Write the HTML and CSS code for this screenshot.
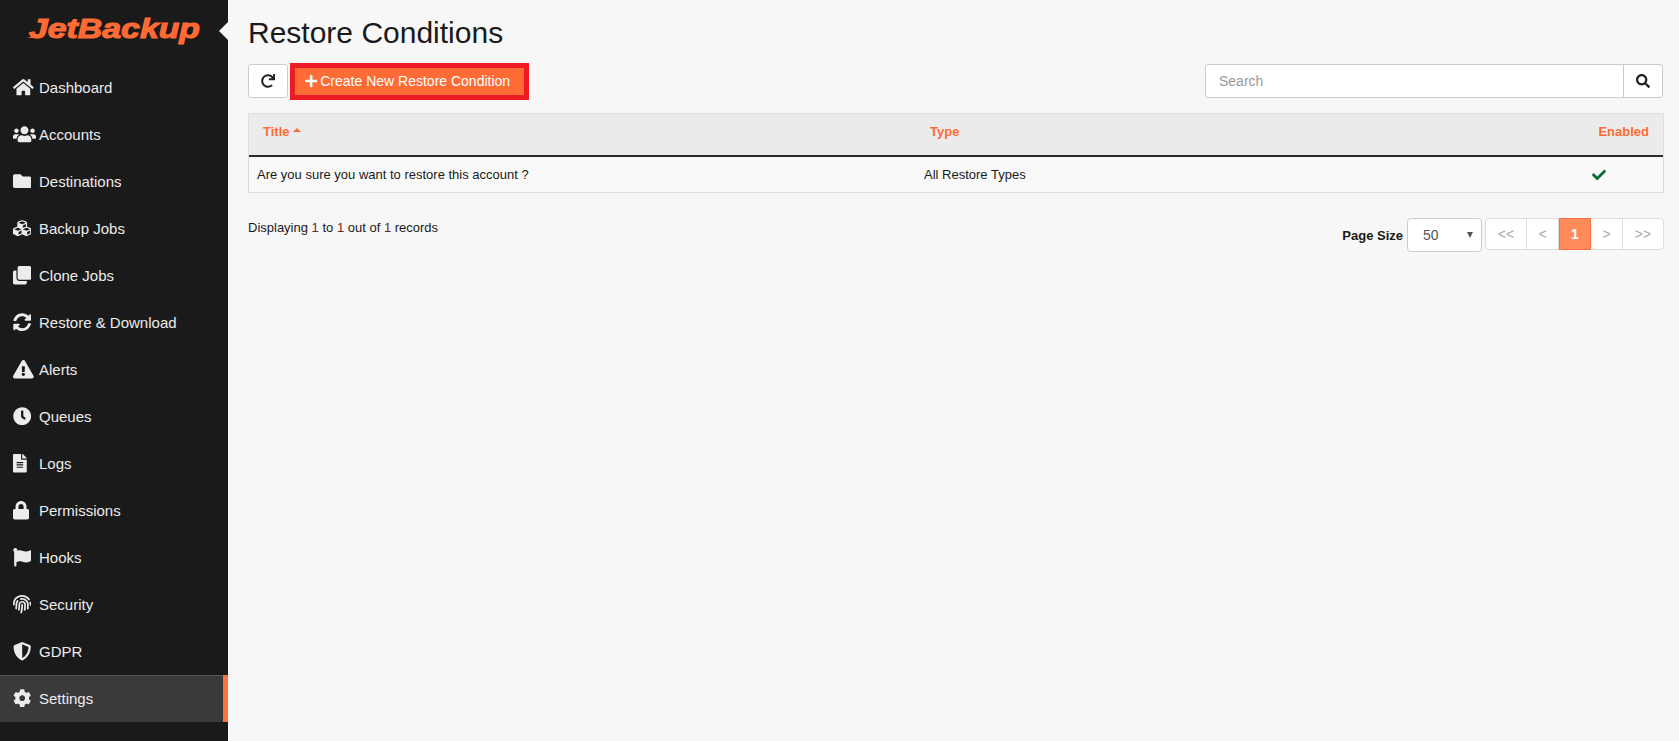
FILE: index.html
```html
<!DOCTYPE html>
<html lang="en">
<head>
<meta charset="utf-8">
<title>Restore Conditions</title>
<link rel="stylesheet" href="styles.css">
</head>
<body>
<aside class="sidebar">
  <div class="brand">
    <svg class="logo" viewBox="0 0 176 30" width="176" height="30"><path class="logo-swoosh" d="M1 22 L18 17 L15 22 Z"/><text class="logo-text" x="3" y="22" textLength="171" lengthAdjust="spacingAndGlyphs">JetBackup</text></svg>
    <span class="notch"></span>
  </div>
  <nav class="menu">
    <a class="item"><span class="slot"><svg class="ic" viewBox="0 0 576 512"><path d="M280.37 148.26L96 300.11V464a16 16 0 0 0 16 16l112.06-.29a16 16 0 0 0 15.92-16V368a16 16 0 0 1 16-16h64a16 16 0 0 1 16 16v95.640a16 16 0 0 0 16 16.050L464 480a16 16 0 0 0 16-16V300L295.670 148.260a12.190 12.190 0 0 0-15.300 0zM571.600 251.470L488 182.560V44.050a12 12 0 0 0-12-12h-56a12 12 0 0 0-12 12v72.610L318.470 43a48 48 0 0 0-61 0L4.340 251.470a12 12 0 0 0-1.600 16.900l25.500 31A12 12 0 0 0 45.150 301l235.220-193.740a12.190 12.190 0 0 1 15.300 0L530.900 301a12 12 0 0 0 16.900-1.600l25.500-31a12 12 0 0 0-1.700-16.930z"/></svg></span><span>Dashboard</span></a>
    <a class="item"><span class="slot"><svg class="ic" viewBox="0 0 640 512"><path d="M96 224c35.300 0 64-28.700 64-64s-28.700-64-64-64-64 28.700-64 64 28.700 64 64 64zm448 0c35.300 0 64-28.700 64-64s-28.700-64-64-64-64 28.700-64 64 28.700 64 64 64zm32 32h-64c-17.600 0-33.500 7.100-45.100 18.600 40.300 22.100 68.900 62 75.100 109.400h66c17.700 0 32-14.300 32-32v-32c0-35.300-28.700-64-64-64zm-256 0c61.900 0 112-50.100 112-112S381.900 32 320 32 208 82.100 208 144s50.100 112 112 112zm76.800 32h-8.300c-20.800 10-43.900 16-68.500 16s-47.600-6-68.500-16h-8.300C179.600 288 128 339.600 128 403.200V432c0 26.500 21.500 48 48 48h288c26.500 0 48-21.500 48-48v-28.800c0-63.600-51.600-115.200-115.200-115.200zm-223.700-13.400C161.500 263.100 145.600 256 128 256H64c-35.300 0-64 28.700-64 64v32c0 17.700 14.300 32 32 32h65.900c6.300-47.400 34.900-87.300 75.200-109.400z"/></svg></span><span>Accounts</span></a>
    <a class="item"><span class="slot"><svg class="ic" viewBox="0 0 512 512"><path d="M464 128H272l-64-64H48C21.490 64 0 85.490 0 112v288c0 26.510 21.490 48 48 48h416c26.510 0 48-21.490 48-48V176c0-26.510-21.490-48-48-48z"/></svg></span><span>Destinations</span></a>
    <a class="item"><span class="slot"><svg class="ic" viewBox="0 0 512 512"><path d="M488.600 250.200L392 214V105.500c0-15-9.300-28.400-23.400-33.700l-100-37.500c-8.100-3.100-17.100-3.100-25.300 0l-100 37.500c-14.100 5.300-23.400 18.700-23.400 33.700V214l-96.600 36.200C9.300 255.500 0 268.900 0 283.900V394c0 13.600 7.700 26.100 19.900 32.200l100 50c10.100 5.100 22.100 5.100 32.200 0l103.900-52 103.900 52c10.100 5.100 22.100 5.100 32.200 0l100-50c12.200-6.100 19.900-18.600 19.900-32.200V283.900c0-15-9.300-28.400-23.400-33.700zM358 214.800l-85 31.900v-68.200l85-37v73.300zM154 104.100l102-38.200 102 38.200v.6l-102 41.400-102-41.400v-.6zm84 291.100l-85 42.500v-79.100l85-38.800v75.400zm0-112l-102 41.400-102-41.400v-.6l102-38.200 102 38.200v.6zm240 112l-85 42.500v-79.100l85-38.800v75.400zm0-112l-102 41.400-102-41.400v-.6l102-38.200 102 38.200v.6z"/></svg></span><span>Backup Jobs</span></a>
    <a class="item"><span class="slot"><svg class="ic" viewBox="0 0 512 512"><path d="M464 0c26.510 0 48 21.490 48 48v288c0 26.510-21.490 48-48 48H176c-26.510 0-48-21.490-48-48V48c0-26.510 21.490-48 48-48h288M176 416c-44.112 0-80-35.888-80-80V128H48c-26.510 0-48 21.490-48 48v288c0 26.510 21.490 48 48 48h288c26.510 0 48-21.490 48-48v-48H176z"/></svg></span><span>Clone Jobs</span></a>
    <a class="item"><span class="slot"><svg class="ic" viewBox="0 0 512 512"><path d="M370.720 133.280C339.458 104.008 298.888 87.962 255.848 88c-77.458.068-144.328 53.178-162.791 126.850-1.344 5.363-6.122 9.150-11.651 9.150H24.103c-7.498 0-13.194-6.807-11.807-14.176C33.933 94.924 134.813 8 256 8c66.448 0 126.791 26.136 171.315 68.685L463.030 40.970C478.149 25.851 504 36.559 504 57.941V192c0 13.255-10.745 24-24 24H345.941c-21.382 0-32.090-25.851-16.971-40.971l41.750-41.749zM32 296h134.059c21.382 0 32.090 25.851 16.971 40.971l-41.750 41.750c31.262 29.273 71.835 45.319 114.876 45.280 77.418-.070 144.315-53.144 162.787-126.849 1.344-5.363 6.122-9.150 11.651-9.150h57.304c7.498 0 13.194 6.807 11.807 14.176C478.067 417.076 377.187 504 256 504c-66.448 0-126.791-26.136-171.315-68.685L48.970 471.030C33.851 486.149 8 475.441 8 454.059V320c0-13.255 10.745-24 24-24z"/></svg></span><span>Restore &amp; Download</span></a>
    <a class="item"><span class="slot"><svg class="ic" viewBox="0 0 576 512"><path d="M569.517 440.013C587.975 472.007 564.806 512 527.940 512H48.054c-36.937 0-59.999-40.055-41.577-71.987L246.423 23.985c18.467-32.009 64.720-31.951 83.154 0l239.940 416.028zM288 354c-25.405 0-46 20.595-46 46s20.595 46 46 46 46-20.595 46-46-20.595-46-46-46zm-43.673-165.346l7.418 136c.347 6.364 5.609 11.346 11.982 11.346h48.546c6.373 0 11.635-4.982 11.982-11.346l7.418-136c.375-6.874-5.098-12.654-11.982-12.654h-63.383c-6.884 0-12.356 5.780-11.981 12.654z"/></svg></span><span>Alerts</span></a>
    <a class="item"><span class="slot"><svg class="ic" viewBox="0 0 512 512"><path d="M256,8C119,8,8,119,8,256S119,504,256,504,504,393,504,256,393,8,256,8Zm92.490,313h0l-20,25a16,16,0,0,1-22.490,2.500h0l-67-49.720a40,40,0,0,1-15-31.230V112a16,16,0,0,1,16-16h32a16,16,0,0,1,16,16V256l58,42.500A16,16,0,0,1,348.490,321Z"/></svg></span><span>Queues</span></a>
    <a class="item"><span class="slot"><svg class="ic" viewBox="0 0 384 512"><path d="M224 136V0H24C10.700 0 0 10.700 0 24v464c0 13.300 10.700 24 24 24h336c13.300 0 24-10.700 24-24V160H248c-13.200 0-24-10.800-24-24zm64 236c0 6.600-5.400 12-12 12H108c-6.600 0-12-5.400-12-12v-8c0-6.600 5.400-12 12-12h168c6.600 0 12 5.400 12 12v8zm0-64c0 6.600-5.400 12-12 12H108c-6.600 0-12-5.400-12-12v-8c0-6.600 5.400-12 12-12h168c6.600 0 12 5.400 12 12v8zm0-72v8c0 6.600-5.400 12-12 12H108c-6.600 0-12-5.400-12-12v-8c0-6.600 5.400-12 12-12h168c6.600 0 12 5.400 12 12zm96-114.100v6.100H256V0h6.100c6.400 0 12.500 2.500 17 7l97.900 98c4.500 4.500 7 10.600 7 16.900z"/></svg></span><span>Logs</span></a>
    <a class="item"><span class="slot"><svg class="ic" viewBox="0 0 448 512"><path d="M400 224h-24v-72C376 68.200 307.800 0 224 0S72 68.200 72 152v72H48c-26.500 0-48 21.500-48 48v192c0 26.500 21.500 48 48 48h352c26.500 0 48-21.500 48-48V272c0-26.500-21.500-48-48-48zm-104 0H152v-72c0-39.700 32.300-72 72-72s72 32.300 72 72v72z"/></svg></span><span>Permissions</span></a>
    <a class="item"><span class="slot"><svg class="ic" viewBox="0 0 512 512"><path d="M349.565 98.783C295.978 98.783 251.721 64 184.348 64c-24.955 0-47.309 4.384-68.045 12.013a55.947 55.947 0 0 0 3.586-23.562C118.117 24.015 94.806 1.206 66.338.048 34.345-1.254 8 24.296 8 56c0 19.026 9.497 35.825 24 45.945V488c0 13.255 10.745 24 24 24h16c13.255 0 24-10.745 24-24v-94.400c28.311-12.064 63.582-22.122 114.435-22.122 53.588 0 97.844 34.783 165.217 34.783 48.169 0 86.667-16.294 122.505-40.858C506.840 359.452 512 349.571 512 339.045v-243.100c0-23.393-24.269-38.870-45.485-29.016-34.338 15.948-76.454 31.854-116.950 31.854z"/></svg></span><span>Hooks</span></a>
    <a class="item"><span class="slot"><svg class="ic" viewBox="0 0 512 512"><path d="M256.120 245.960c-13.250 0-24 10.740-24 24 1.140 72.250-8.140 141.900-27.700 211.550-2.730 9.720 2.150 30.490 23.120 30.490 10.480 0 20.110-6.920 23.090-17.520 13.530-47.910 31.040-125.410 29.480-224.520.01-13.250-10.730-24-23.990-24zm-.86-81.730C194 164.160 151.250 211.300 152.100 265.320c.75 47.940-3.750 95.910-13.370 142.550-2.690 12.980 5.670 25.690 18.640 28.360 13.050 2.670 25.670-5.660 28.360-18.640 10.340-50.090 15.170-101.580 14.370-153.020-.41-25.950 19.920-52.490 54.450-52.340 31.310.47 57.150 25.340 57.620 55.470.77 48.050-2.810 96.330-10.610 143.550-2.170 13.060 6.690 25.420 19.760 27.580 19.970 3.330 26.810-15.100 27.580-19.770 8.280-50.030 12.060-101.210 11.270-152.110-.88-55.800-47.940-101.880-104.910-102.720zm-110.690-19.780c-10.300-8.340-25.370-6.800-33.760 3.480-25.620 31.500-39.390 71.280-38.750 112 .59 37.580-2.470 75.270-9.110 112.050-2.340 13.050 6.310 25.530 19.360 27.890 20.110 3.500 27.070-14.810 27.890-19.360 7.190-39.840 10.500-80.660 9.860-121.330-.47-29.880 9.200-57.880 28-80.970 8.350-10.280 6.790-25.390-3.490-33.760zm109.470-62.330c-15.410-.41-30.870 1.440-45.780 4.970-12.890 3.060-20.870 15.980-17.830 28.890 3.060 12.890 16 20.830 28.890 17.830 11.050-2.610 22.470-3.770 34-3.690 75.430 1.130 137.730 61.500 138.880 134.580.59 37.880-1.280 76.110-5.580 113.630-1.500 13.170 7.950 25.080 21.110 26.580 16.720 1.950 25.510-11.880 26.580-21.110a929.060 929.060 0 0 0 5.890-119.850c-1.560-98.750-85.070-180.330-186.160-181.830zm252.070 121.450c-2.860-12.920-15.510-21.200-28.610-18.270-12.940 2.860-21.120 15.660-18.260 28.610 4.710 21.410 4.910 37.410 4.700 61.600-.11 13.270 10.550 24.090 23.800 24.200h.2c13.170 0 23.890-10.610 24-23.800.18-22.180.4-44.110-5.830-72.340zm-40.120-90.720C417.290 43.460 337.600 1.290 252.810.02 183.020-.82 118.470 24.910 70.460 72.940 24.090 119.370-.9 181.040.14 246.650l-.12 21.470c-.39 13.250 10.030 24.310 23.280 24.690.23.020.48.020.72.020 12.920 0 23.590-10.300 23.970-23.300l.16-23.640c-.83-52.500 19.160-101.860 56.280-139 38.760-38.800 91.340-59.670 147.680-58.860 69.450 1.030 134.730 35.560 174.620 92.390 7.610 10.860 22.560 13.450 33.420 5.860 10.840-7.620 13.460-22.590 5.840-33.430z"/></svg></span><span>Security</span></a>
    <a class="item"><span class="slot"><svg class="ic" viewBox="0 0 512 512"><path d="M466.500 83.700l-192-80a48.150 48.150 0 0 0-36.900 0l-192 80C27.700 91.100 16 108.600 16 128c0 198.500 114.500 335.700 221.500 380.300 11.800 4.900 25.100 4.900 36.900 0C360.100 472.600 496 349.300 496 128c0-19.400-11.700-36.900-29.500-44.300zM256.100 446.300l-.1-381 175.900 73.300c-3.300 151.400-82.100 261.100-175.800 307.700z"/></svg></span><span>GDPR</span></a>
    <a class="item active"><span class="slot"><svg class="ic" viewBox="0 0 512 512"><path d="M487.400 315.700l-42.600-24.600c4.300-23.200 4.300-47 0-70.200l42.600-24.600c4.900-2.800 7.100-8.600 5.500-14-11.100-35.600-30-67.800-54.700-94.600-3.800-4.100-10-5.100-14.800-2.300L380.800 110c-17.900-15.400-38.500-27.300-60.800-35.100V25.800c0-5.600-3.900-10.500-9.400-11.700-36.700-8.200-74.300-7.800-109.200 0-5.500 1.200-9.400 6.100-9.400 11.700V75c-22.200 7.900-42.800 19.800-60.800 35.100L88.700 85.500c-4.900-2.800-11-1.900-14.800 2.300-24.700 26.700-43.600 58.900-54.700 94.600-1.700 5.400.6 11.200 5.500 14L67.300 221c-4.300 23.200-4.300 47 0 70.200l-42.600 24.600c-4.900 2.800-7.100 8.600-5.500 14 11.100 35.600 30 67.800 54.700 94.600 3.800 4.100 10 5.100 14.800 2.300l42.600-24.600c17.900 15.400 38.500 27.300 60.800 35.100v49.200c0 5.600 3.900 10.500 9.400 11.700 36.700 8.200 74.300 7.800 109.200 0 5.500-1.200 9.400-6.100 9.400-11.700v-49.200c22.200-7.900 42.800-19.800 60.800-35.100l42.600 24.600c4.900 2.800 11 1.900 14.800-2.300 24.700-26.700 43.600-58.900 54.700-94.600 1.500-5.500-.7-11.300-5.600-14.100zM256 336c-44.100 0-80-35.900-80-80s35.900-80 80-80 80 35.900 80 80-35.900 80-80 80z"/></svg></span><span>Settings</span></a>
  </nav>
</aside>
<main class="main">
  <h1 class="title">Restore Conditions</h1>
  <div class="toolbar">
    <div class="actions">
      <button class="btn-refresh"><svg class="ic-dark" viewBox="0 0 512 512"><path d="M500.330 0h-47.410a12 12 0 0 0-12 12.570l4 82.760A247.420 247.420 0 0 0 256 8C119.340 8 7.900 119.530 8 256.190 8.100 393.070 119.100 504 256 504a247.100 247.100 0 0 0 166.180-63.910 12 12 0 0 0 .480-17.430l-34-34a12 12 0 0 0-16.380-.550A176 176 0 1 1 402.100 157.800l-101.530-4.870a12 12 0 0 0-12.570 12v47.410a12 12 0 0 0 12 12h200.330a12 12 0 0 0 12-12V12a12 12 0 0 0-12-12z"/></svg></button>
      <div class="highlight"><button class="btn-create"><svg class="ic-plus" viewBox="0 0 448 512"><path d="M416 208H272V64c0-17.670-14.330-32-32-32h-32c-17.670 0-32 14.330-32 32v144H32c-17.670 0-32 14.330-32 32v32c0 17.670 14.330 32 32 32h144v144c0 17.670 14.330 32 32 32h32c17.670 0 32-14.330 32-32V304h144c17.670 0 32-14.330 32-32v-32c0-17.670-14.330-32-32-32z"/></svg>Create New Restore Condition</button></div>
    </div>
    <div class="search">
      <input class="search-input" type="text" placeholder="Search">
      <button class="search-btn"><svg class="ic-dark" viewBox="0 0 512 512"><path d="M505 442.700L405.300 343c-4.500-4.500-10.600-7-17-7H372c27.600-35.300 44-79.700 44-128C416 93.100 322.900 0 208 0S0 93.100 0 208s93.100 208 208 208c48.300 0 92.700-16.400 128-44v16.300c0 6.400 2.500 12.500 7 17l99.700 99.700c9.400 9.400 24.600 9.400 33.900 0l28.300-28.300c9.400-9.400 9.400-24.600.1-34zM208 336c-70.700 0-128-57.200-128-128 0-70.700 57.200-128 128-128 70.700 0 128 57.200 128 128 0 70.700-57.200 128-128 128z"/></svg></button>
    </div>
  </div>
  <div class="table">
    <div class="thead">
      <div class="col-title">Title <span class="caret"></span></div>
      <div class="col-type">Type</div>
      <div class="col-enabled">Enabled</div>
    </div>
    <div class="trow">
      <div class="cell-title">Are you sure you want to restore this account ?</div>
      <div class="cell-type">All Restore Types</div>
      <div class="cell-enabled"><svg class="ic-check" viewBox="0 0 512 512"><path d="M173.898 439.404l-166.400-166.400c-9.997-9.997-9.997-26.206 0-36.204l36.203-36.204c9.997-9.998 26.207-9.998 36.204 0L192 312.690 432.095 72.596c9.997-9.997 26.207-9.997 36.204 0l36.203 36.204c9.997 9.997 9.997 26.206 0 36.204l-294.400 294.401c-9.998 9.997-26.207 9.997-36.204-.001z"/></svg></div>
    </div>
  </div>
  <div class="footer">
    <div class="records">Displaying <span class="num">1</span> to <span class="num">1</span> out of <span class="num">1</span> records</div>
    <div class="paging">
      <span class="size-label">Page Size</span>
      <div class="select"><span>50</span><span class="arrow"></span></div>
      <div class="pager">
        <span class="pg w-wide">&lt;&lt;</span><span class="pg">&lt;</span><span class="pg current">1</span><span class="pg">&gt;</span><span class="pg w-wide">&gt;&gt;</span>
      </div>
    </div>
  </div>
</main>
</body>
</html>
```
FILE: styles.css
```css
* { box-sizing: border-box; }
html, body { margin: 0; height: 100%; }
body {
  display: flex;
  height: 741px;
  overflow: hidden;
  background: #f7f7f7;
  font-family: "Liberation Sans", Arial, sans-serif;
  color: #1a1a1a;
}
.sidebar {
  width: 228px;
  flex: none;
  background: #1a1a1a;
  color: #ececec;
}
.brand {
  height: 64px;
  display: flex;
  align-items: flex-start;
  justify-content: space-between;
  padding: 16px 0 0 26px;
}
.logo { display: block; overflow: visible; }
.logo-text {
  font-family: "Liberation Sans", Arial, sans-serif;
  font-weight: 700;
  font-style: italic;
  font-size: 28px;
  fill: #ff6b35;
  stroke: #ff6b35;
  stroke-width: 1.100px;
}
.logo-swoosh { fill: #ff6b35; }
.notch {
  width: 0;
  height: 0;
  margin-top: 6px;
  border-style: solid;
  border-width: 9px 9px 9px 0;
  border-color: transparent #f7f7f7 transparent transparent;
}
.menu { display: flex; flex-direction: column; }
.item {
  height: 47px;
  display: flex;
  align-items: center;
  padding-left: 13px;
  font-size: 15px;
}
.item.active {
  background: #3a3a3a;
  box-shadow: inset 0 1px 0 #555;
  border-right: 5px solid #ff713c;
}
.slot { width: 26px; flex: none; display: flex; align-items: center; }
.ic { display: block; height: 18.400px; fill: #ececec; }
.main {
  flex: 1;
  min-width: 0;
  padding: 0 15px 0 20px;
}
.title {
  margin: 0;
  height: 63px;
  padding-top: 15px;
  font-size: 30px;
  line-height: 36px;
  font-weight: 400;
  color: #1a1a1a;
}
.toolbar {
  display: flex;
  justify-content: space-between;
  align-items: flex-start;
  height: 50px;
}
.actions { display: flex; align-items: flex-start; gap: 2px; padding-top: 1px; }
.btn-refresh {
  width: 40px;
  height: 34px;
  padding: 0;
  background: #fff;
  border: 1px solid #ccc;
  border-radius: 3px;
  display: flex;
  align-items: center;
  justify-content: center;
}
.ic-dark { width: 14px; height: 14px; fill: #222; }
.highlight { margin-top: -1px; border: 5px solid #ed1c24; }
.btn-create {
  display: flex;
  align-items: center;
  gap: 3px;
  height: 27px;
  width: 229px;
  padding: 0 0 2px 10px;
  background: #ff6b35;
  border: 0;
  color: #fff;
  font: 14px "Liberation Sans", Arial, sans-serif;
}
.ic-plus { height: 14px; width: 12.250px; fill: #fff; }
.search {
  display: flex;
  width: 458px;
  height: 34px;
  margin: 1px 1px 0 0;
  background: #fff;
  border: 1px solid #ccc;
  border-radius: 3px;
}
.search-input {
  flex: 1;
  min-width: 0;
  border: 0;
  background: transparent;
  padding: 0 13px;
  font: 14px "Liberation Sans", Arial, sans-serif;
  outline: 0;
}
.search-input::placeholder { color: #999; opacity: 1; }
.search-btn {
  width: 39px;
  padding: 0;
  background: transparent;
  border: 0;
  border-left: 1px solid #ccc;
  display: flex;
  align-items: center;
  justify-content: center;
}
.table { border: 1px solid #ddd; font-size: 13px; }
.thead {
  display: flex;
  align-items: center;
  height: 43px;
  background: #ebebeb;
  border-bottom: 2px solid #2b2b2b;
  color: #ff6b35;
  font-weight: 700;
  padding-bottom: 6px;
}
.col-title { width: 681px; padding-left: 14px; }
.col-type { flex: 1; }
.col-enabled { padding-right: 14px; }
.caret {
  display: inline-block;
  width: 0;
  height: 0;
  margin: 0 0 4px 0;
  border-style: solid;
  border-width: 0 4px 4px;
  border-color: transparent transparent #ff6b35;
}
.trow { display: flex; align-items: center; height: 35px; background: #f9f9f9; }
.cell-title { width: 675px; padding-left: 8px; }
.cell-type { flex: 1; }
.cell-enabled { width: 71px; display: flex; }
.ic-check { width: 14px; height: 14px; fill: #0e6b34; }
.footer {
  display: flex;
  justify-content: space-between;
  align-items: flex-start;
  padding-top: 25px;
  font-size: 13px;
}
.records { padding-top: 2px; }
.num { color: #5a2a2a; }
.paging { display: flex; align-items: flex-start; }
.size-label { font-weight: 700; margin: 10px 4px 0 0; }
.select {
  width: 75px;
  height: 34px;
  display: flex;
  align-items: center;
  justify-content: space-between;
  padding: 0 8px 0 15px;
  border: 1px solid #ccc;
  border-radius: 4px;
  background: #fff;
  font-size: 14px;
  color: #555;
}
.arrow {
  width: 0;
  height: 0;
  border-style: solid;
  border-width: 6px 3px 0;
  border-color: #555 transparent transparent;
}
.pager {
  display: flex;
  height: 32px;
  margin-left: 3px;
  background: #fff;
  border: 1px solid #ddd;
  border-radius: 4px;
  font-size: 14px;
  color: #aaa;
}
.pg {
  width: 32px;
  display: flex;
  align-items: center;
  justify-content: center;
  border-right: 1px solid #ddd;
}
.pg:last-child { border-right: 0; }
.w-wide { width: 40px; }
.pg:first-child { width: 41px; }
.pg.current {
  margin: -1px 0;
  background: #ff8a5c;
  border: 1px solid #ff713c;
  color: #fff;
  font-weight: 700;
}
```
